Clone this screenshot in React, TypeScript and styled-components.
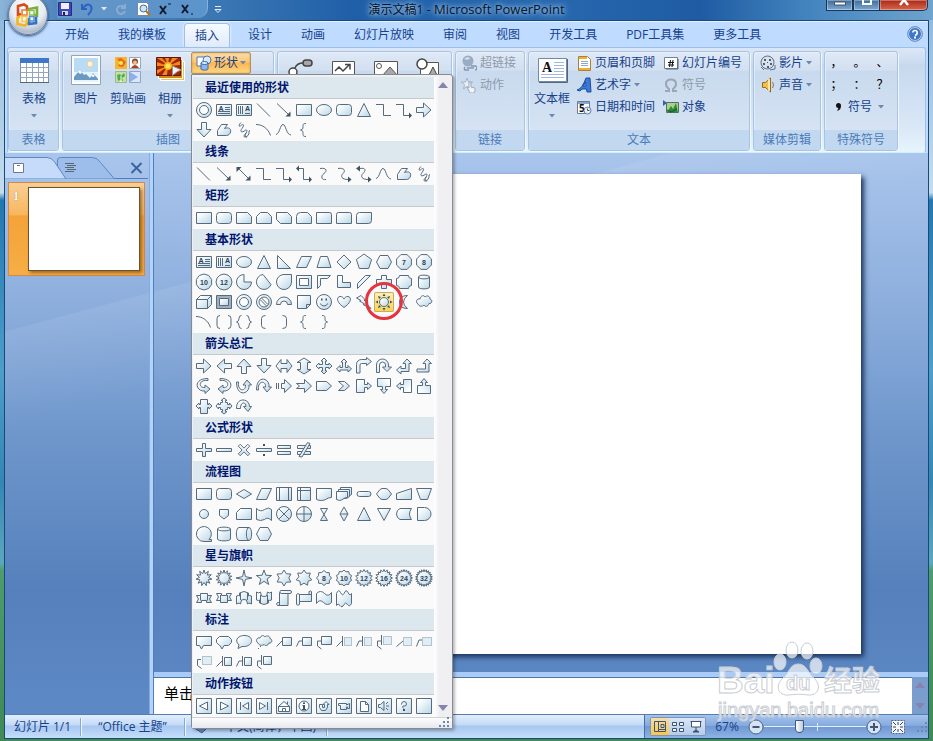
import React from "react";
import styled, { createGlobalStyle, css } from "styled-components";

const Global = createGlobalStyle`
  * { box-sizing: border-box; }
  body {
    margin: 0;
    font-family: "Open Sans", "Noto Sans CJK SC", sans-serif;
    font-size: 12px;
    line-height: 18px;
    color: #15428b;
  }
  button, textarea, input { font: inherit; color: inherit; margin: 0; }
  button { padding: 0; border: 0; background: none; cursor: pointer; white-space: nowrap; }
  svg { display: block; flex: none; }
`;

/* ---------- shape gallery data ---------- */

// Each drawing lives in a 20x20 cell. Prefixes: f filled outline, l line,
// s solid, w pale fill, k dark fill, d dotted outline, t caption, r transform.
const poly = (n: number, r: number, turn = 0, cx = 10, cy = 10) =>
  "M" +
  Array.from({ length: n }, (_, i) => {
    const a = (Math.PI * 2 * i) / n - Math.PI / 2 + turn;
    return `${(cx + r * Math.cos(a)).toFixed(1)} ${(cy + r * Math.sin(a)).toFixed(1)}`;
  }).join("L") +
  "Z";

const star = (n: number, R: number, r: number) =>
  "M" +
  Array.from({ length: n * 2 }, (_, i) => {
    const a = (Math.PI * i) / n - Math.PI / 2;
    const q = i % 2 ? r : R;
    return `${(10 + q * Math.cos(a)).toFixed(1)} ${(10 + q * Math.sin(a)).toFixed(1)}`;
  }).join("L") +
  "Z";

const circle = (r: number, cx = 10, cy = 10) =>
  `M${cx - r} ${cy}a${r} ${r} 0 1 0 ${2 * r} 0a${r} ${r} 0 1 0 ${-2 * r} 0z`;

const rightArrow = "f:M2.5 7.5h7v-4.5l7.5 7-7.5 7v-4.5h-7z";
const box = "M2.5 2.5h15v15h-15z";
const bent = "f:M2.5 17V8.5a5 5 0 0 1 5-5h5V1.5l5 4-5 4V7.5h-5a1.5 1.5 0 0 0-1.5 1.5v8z";
const calloutArrow = "f:M2.5 3.5h8v5h3v-2l4 3.5-4 3.5v-2h-3v5h-8z";
const uturn = "f:M2.5 16.5V9a6 6 0 0 1 12 0v2h3l-4.5 4.5-4.5-4.5h3V9a3 3 0 0 0-6 0v7.5z";
const curved = "f:M14 2.5C5 2.5 2 7 3.5 11c1 2.5 4 4.5 7.5 4v2.5l5-4.5-5-4v2.5C7 12 5.5 9 6.5 7S10 4 14 4.5z";

const S: Record<string, string[]> = {
  donut: ["f:" + circle(7.5), "w:" + circle(4.5)],
  textbox: ["f:M2.5 4.5h15v11h-15z", "l:M11 7.5h5M11 9.5h5M4 11.5h12M4 13.5h12", "t:7,10.5:A"],
  vtextbox: ["f:M2.5 4.5h15v11h-15z", "l:M4.5 6v8M6.5 6v8M8.5 6v8M11 13.5h5", "t:13.5,11:A"],
  line: ["l:M3 3.5L16 16.5"],
  arrowLine: ["l:M3 3.5L14 14", "s:M16.5 16.5v-5l-5 5z"],
  dblArrow: ["l:M4 4L15 15", "s:M16.5 16.5v-5l-5 5z", "s:M2.5 3v5l5-5z"],
  rect: ["f:M2.5 4.5h15v11h-15z"],
  ellipse: ["f:M2.5 10a7.5 5.5 0 1 0 15 0a7.5 5.5 0 1 0-15 0z"],
  roundRect: ["f:M5.5 4.5h9a3 3 0 0 1 3 3v5a3 3 0 0 1-3 3h-9a3 3 0 0 1-3-3v-5a3 3 0 0 1 3-3z"],
  triangle: ["f:M10 3.5L16.5 16.5h-13z"],
  elbow: ["l:M2 4.5h7.5v11h7.5"],
  elbowArrow: ["l:M2 4.5h7.5v11h5.5", "s:M15 12.5v6l3-3z"],
  elbowDbl: ["l:M5 4.5h4.5v11h5.5", "s:M15 12.5v6l3-3z", "s:M5 1.5v6l-3-3z"],
  right: [rightArrow],
  left: [rightArrow, "r:rotate(180 10 10)"],
  up: [rightArrow, "r:rotate(-90 10 10)"],
  down: [rightArrow, "r:rotate(90 10 10)"],
  freeform: ["f:M3.5 15.5v-5l4-6h6l-3 4c4-1.5 7 0 6 3.5-.5 2-2 3.5-4 3.5z"],
  scribble: ["l:M7 2.5c-3 3-2 5 0 3s4-1 1 3 1 4 3 2 3 1 0 4 1 3 3 1 0-5 2-5M12 13c-2 3 0 5 1 4"],
  arc: ["l:M2 4.5c6 0 12 3.5 14.5 11"],
  curve: ["l:M2 14.5c4-1 4-10 7-10s3 10 8 10.5"],
  lbrace: ["l:M12 3.5c-3 0-3 1-3 3s0 3-2.5 3.5c2.5.5 2.5 1.5 2.5 3.5s0 3 3 3"],
  rbrace: ["l:M8 3.5c3 0 3 1 3 3s0 3 2.5 3.5c-2.5.5-2.5 1.5-2.5 3.5s0 3-3 3"],
  sCurve: ["l:M6 4.5c6-1 8 2 4 5s-2 7 2 6"],
  sCurveArrow: ["l:M4 4.5c6-1 8 2 5 5s-1 6 5 6", "s:M14 12.5v6l3.5-3z"],
  sCurveDbl: ["l:M6 4.5c6-1 6 2 3 5s-1 6 5 6", "s:M14 12.5v6l3.5-3z", "s:M6 1.5v6l-4-3z"],
  snip1: ["f:M2.5 4.5h11l4 4v7h-15z"],
  snip2: ["f:M2.5 8.5l4-4h7l4 4v7h-15z"],
  snipDiag: ["f:M2.5 4.5h11l4 4v7h-11l-4-4z"],
  snipRound: ["f:M2.5 8.5a4 4 0 0 1 4-4h7l4 4v7h-15z"],
  round1: ["f:M2.5 4.5h13a2 2 0 0 1 2 2v9h-15z"],
  round2: ["f:M4.5 4.5h11a2 2 0 0 1 2 2v9h-15v-9a2 2 0 0 1 2-2z"],
  roundDiag: ["f:M5.5 4.5h12v8a3 3 0 0 1-3 3h-12v-8a3 3 0 0 1 3-3z"],
  rtTriangle: ["f:M3.5 3.5L16.5 16.5h-13z"],
  parallelogram: ["f:M7.5 4.5h10l-5 11h-10z"],
  trapezoid: ["f:M6.5 4.5h7l3.5 11h-14z"],
  diamond: ["f:M10 3L17 10l-7 7-7-7z"],
  pentagon: ["f:" + poly(5, 8)],
  hexagon: ["f:M6 3.5h8l3.5 6.5-3.5 6.5H6L2.5 10z"],
  hept: ["f:" + poly(8, 8, 0.39), "t:10,12.5:7"],
  oct: ["f:" + poly(8, 8, 0.39), "t:10,12.5:8"],
  dec: ["f:" + poly(10, 8), "t:10,12.5:10"],
  dodec: ["f:" + poly(12, 8), "t:10,12.5:12"],
  pie: ["f:M10 2.5a7.5 7.5 0 1 0 7.5 7.5H10z"],
  chord: ["f:M9 2.5a7.5 7.5 0 1 0 8 10z"],
  tear: ["f:M10 2.5h7.5V10A7.5 7.5 0 1 1 10 2.5z"],
  frame: ["f:M2.5 3.5h15v13h-15z", "w:M5.5 6.5h9v7h-9z"],
  halfFrame: ["f:M3.5 3.5h13l-3 3h-7v7l-3 3z"],
  lShape: ["f:M3.5 3.5h5v7h8v5h-13z"],
  stripe: ["f:M3.5 16.5v-5l8-8h5z"],
  cross: ["f:M7.5 3.5h5v4h5v5h-5v4h-5v-4h-5v-5h5z"],
  plaque: ["f:M5.5 3.5h9q0 3 3 3v7q-3 0-3 3h-9q0-3-3-3v-7q3 0 3-3z"],
  can: ["f:M4.5 5v10c0 2.5 11 2.5 11 0V5c0-2.5-11-2.5-11 0z", "l:M4.5 5c0 2.5 11 2.5 11 0"],
  cube: ["f:M2.5 7.5l4-4h11v9l-4 4h-11z", "l:M2.5 7.5h11v9M13.5 7.5l4-4"],
  bevel: ["k:M2.5 3.5h15v13h-15z", "f:M5.5 6.5h9v7h-9z"],
  noSym: ["f:" + circle(7.5), "w:" + circle(5), "l:M6 7.5l6.5 6.5M7.5 6l6.5 6.5"],
  blockArc: ["f:M2.5 12.5a7.5 7.5 0 0 1 15 0h-4a3.5 3.5 0 0 0-7 0z"],
  fold: ["f:M3.5 3.5h13v9l-4 4h-9z", "l:M12.5 16.5v-4h4"],
  smiley: ["f:" + circle(7.5), "l:M6 11.5q4 5 8 0", "s:M7 6.500h1.5v2H7zM11.5 6.5H13v2h-1.5z"],
  heart: ["f:M10 15.5C2 10 2.5 5 6 4.5c2 0 3.5 1 4 2.5.5-1.5 2-2.5 4-2.5 3.5.5 4 5.5-4 11z"],
  bolt: ["f:M2.5 6l4.5-2.5 4 4-1 .5 4 4-1 .5 4 4-8-4 1.5-.5-5-3 1.5-.5z"],
  sun: ["f:" + circle(4.5), "s:M10 1.5l1.500 2.5h-3zM10 18.5l1.5-2.5h-3zM1.5 10L4 8.5v3zM18.5 10L16 8.5v3zM4 4l3 1-2 2zM16 4l-3 1 2 2zM4 16l3-1-2-2zM16 16l-3-1 2-2z"],
  moon: ["f:M13.5 3.5q-8 6.5 0 13-8 0-8-6.5t8-6.5z"],
  cloud: ["f:M4 12c-3-2-1-6 2-5 1-4 4-4 5-2 2-2 5-1 5 2 3 1 2 5-1 4.500-1 3.5-4 3.5-5 1.5-2 2-5 1.5-6-1z"],
  brackets: ["l:M6 3.5q-3 0-3 3v7q0 3 3 3M14 3.5q3 0 3 3v7q0 3-3 3"],
  braces: ["l:M7.5 3.5q-2.5 0-2.5 3t-2.5 3.5q2.5.5 2.5 3.5t2.5 3M12.5 3.5q2.5 0 2.5 3t2.5 3.5q-2.5.5-2.5 3.5t-2.5 3"],
  lbracket: ["l:M11.5 3.5q-4 0-4 3v7q0 3 4 3"],
  rbracket: ["l:M8.5 3.5q4 0 4 3v7q0 3-4 3"],
  leftRight: ["f:M2 10l5-6.5v4h6v-4l5 6.5-5 6.5v-4H7v4z"],
  upDown: ["f:M10 2l7 4.5h-3.5v7H17L10 18l-7-4.5h3.5v-7H3z"],
  quad: ["f:M10 2l3 3h-1.5v3.5H15V7l3 3-3 3v-1.5h-3.5V15H13l-3 3-3-3h1.5v-3.5H5V13l-3-3 3-3v1.5h3.5V5H7z"],
  triArrow: ["f:M10 3l3 3h-1.5v5.5H14v-2l3.5 3.5-3.5 3v-2H6v2L2.5 13 6 9.5v2h2.5V6H7z"],
  bentArrow: [bent],
  uturn: [uturn],
  leftUp: ["f:M13 3l4.5 4.5h-2.5v8H7V18l-4.5-4L7 10v2.5h4.5v-5H9z"],
  bentUp: ["f:M13 3l4.5 4.5h-2.5v8.5H3v-3h8.5v-5.5H9z"],
  curvedRight: [curved],
  curvedLeft: [curved, "r:translate(20 0) scale(-1 1)"],
  curvedUp: [curved, "r:rotate(-90 10 10)"],
  curvedDown: [curved, "r:translate(20 0) scale(-1 1) rotate(90 10 10)"],
  striped: ["f:M7.5 7.5h3v-4l7 6.5-7 6.5v-4h-3z", "l:M2.5 7v6M4.5 7v6"],
  notched: ["f:M2.5 7.5h8v-4l7 6.5-7 6.5v-4h-8l3-2.5z"],
  homePlate: ["f:M2.5 5.5h10l5 4.5-5 4.5h-10z"],
  chevron: ["f:M4.5 5.5h6l5 4.5-5 4.5h-6l5-4.5z"],
  rightCall: [calloutArrow],
  downCall: [calloutArrow, "r:rotate(90 10 10)"],
  leftCall: [calloutArrow, "r:rotate(180 10 10)"],
  upCall: [calloutArrow, "r:rotate(-90 10 10)"],
  lrCall: ["f:M6.5 3.5h7v5h1.5V7l3 3-3 3v-1.5h-1.5v6h-7v-6H5V13l-3-3 3-3v1.5h1.5z"],
  quadCall: ["f:M10 2l3 2.5h-1.5v2h2v2h2V7l2.5 3-2.5 3v-1.500h-2v2h-2v2H13L10 18l-3-2.5h1.5v-2h-2v-2h-2V13L2 10l2.5-3v1.5h2v-2h2v-2H7z"],
  circular: ["f:M2.5 12.5C2 1 15.5 2 15.5 10.5h2l-3.5 5-4.5-5h2.5c0-5-5.5-5-5.5 2z"],
  plus: ["f:M8.5 3.5h3v5h6v3h-6v5h-3v-5h-6v-3h6z"],
  minus: ["f:M2.5 8.5h15v3h-15z"],
  times: ["f:M8.5 2.5h3v6h6v3h-6v6h-3v-6h-6v-3h6z", "r:rotate(45 10 10) translate(1 1) scale(.9)"],
  divide: ["f:M2.5 8.5h15v3h-15z", "s:M9 4h2v2H9zM9 14h2v2H9z"],
  equal: ["f:M3.5 5.5h13v3h-13z", "f:M3.5 11.5h13v3h-13z"],
  notEqual: ["f:M3.5 5.5h13v3h-13z", "f:M3.5 11.5h13v3h-13z", "f:M5 16.5L13.5 2.5l2.5 1L8 17z"],
  flatDiamond: ["f:M10 5.5l7.5 4.5-7.5 4.5L2.5 10z"],
  predefined: ["f:M2.5 3.5h15v13h-15z", "l:M5.5 3.5v13M14.5 3.5v13"],
  internal: ["f:M3.5 3.5h13v13h-13z", "l:M6.5 3.5v13M3.5 6.5h13"],
  document: ["f:M2.5 4.5h15v9c-5 0-5 3-10 3q-3 0-5-1z"],
  multidoc: ["f:M6.5 3.5h11v7l-3 2h-8z", "f:M4.5 5.5h11v7l-3 2h-8z", "f:M2.5 7.5h11v6c-4 0-5 3-8 3l-3-1z"],
  terminator: ["f:M5.5 7.5h9a2.5 2.5 0 0 1 0 5h-9a2.5 2.5 0 0 1 0-5z"],
  prep: ["f:M6 5.5l2-1h4l2 1 3.5 4.5-3.5 4.5-2 1H8l-2-1L2.5 10z"],
  manualIn: ["f:M2.5 9.5l15-5v11h-15z"],
  manualOp: ["f:M2.5 4.5h15l-4 11h-7z"],
  circleSm: ["f:" + circle(4.5)],
  offpage: ["f:M5.5 5.5h9v6L10 15l-4.5-3.5z"],
  card: ["f:M6.5 4.5h11v11h-15v-7z"],
  tape: ["f:M2.5 4.5q4 4 8 1 4-3 7 0v11q-4-4-7-1-4 2-8 0z"],
  sumJ: ["f:" + circle(7.5), "l:M5 5l10 10M15 5L5 15"],
  orJ: ["f:" + circle(7.5), "l:M10 2.5v15M2.5 10h15"],
  collate: ["f:M6.5 4.5h7L6.5 16.5h7z"],
  sort: ["f:M10 3l4 7-4 7-4-7z", "l:M6 10h8"],
  merge: ["f:M3.5 4.5h13L10 16.5z"],
  stored: ["f:M6 4.5h11.5q-4 5.5 0 11H6q-3.5-1.5-3.5-5.5T6 4.5z"],
  delay: ["f:M3.5 3.5h7a6.5 6.5 0 0 1 0 13h-7z"],
  seq: ["f:M10 17.5a7.5 7.5 0 1 1 5-2h2.5v2z"],
  disk: ["f:M3.5 5v10c0 2.5 13 2.5 13 0V5c0-2.5-13-2.5-13 0z", "l:M3.5 5c0 2.5 13 2.5 13 0"],
  direct: ["f:M5 3.5h10c3.5 0 3.5 13 0 13H5c-3.5 0-3.5-13 0-13z", "l:M15 3.5c-3.5 0-3.5 13 0 13"],
  display: ["f:M6 3.5h8l3.5 6.5-3.5 6.5H6L2.5 10z"],
  boom1: ["f:" + star(11, 8, 4.5)],
  boom2: ["f:" + star(14, 8, 4.8)],
  star4: ["f:" + star(4, 8, 2)],
  star5: ["f:" + star(5, 8, 3.3)],
  star6: ["f:" + star(6, 8, 4.8)],
  star7: ["f:" + star(7, 8, 5.2)],
  star8: ["f:" + star(8, 7.5, 6), "t:10,12.5:8"],
  star10: ["f:" + star(10, 8, 6.5), "t:10,12.5:10"],
  star12: ["f:" + star(14, 8.5, 6.3), "t:10,12.5:12"],
  star16: ["f:" + star(16, 8.5, 6.3), "t:10,12.5:16"],
  star24: ["f:" + star(20, 8.5, 6.3), "t:10,12.5:24"],
  star32: ["f:" + star(22, 8.5, 6.3), "t:10,12.5:32"],
  ribbonUp: ["f:M2.5 7.5h4v-2h7v2h4l-2 3.5 2 3.5h-5v-2h-5v2h-5l2-3.5z", "l:M6.5 7.5v5M13.5 7.5v5"],
  ribbonDown: ["f:M2.5 5.5h5v2h5v-2h5l-2 3.5 2 3.5h-4v2h-7v-2h-4l2-3.5z", "l:M6.5 7v6M13.5 7v6"],
  ribbonCurveUp: ["f:M2.5 8q2-1 3 0V5q4.5-3 9 0v3q1-1 3 0v8q-3-2-4 0l-1-4q-2.5-1-5 0l-1 4q-1-2-4 0z", "l:M6.5 5v7M13.5 5v7"],
  ribbonCurveDown: ["f:M2.5 4q2 2 4 0l1 4q2.5 1 5 0l1-4q2 2 4 0v8q-2 1-3 0v3q-4.5 3-9 0v-3q-1 1-3 0z", "l:M6.5 7v8M13.5 7v8"],
  vScroll: ["f:M6.5 4.5a1.5 1.5 0 0 1 0-2h9.5a1.5 1.5 0 0 1 0 3h-2v12H3.5q-2-1.5 0-3h2v-10z", "l:M6.5 5.5h8M5.5 14.5v3"],
  hScroll: ["f:M2.5 6.5q1.5-2 3 0h9.5V3.5q2-1 2.5 0v10h-12v3q-2 1.5-3 0z", "l:M5.5 6v7.5M15 6.5h2"],
  wave: ["f:M2.5 5.5q4-4 8 0t7-1v10q-4 4-8 0t-7 1z"],
  doubleWave: ["f:M2.5 5.5q2-5 4-1t3.5 1q2-5 4-1t3.5 1v10q-2 4-4 1t-3.5 0q-2 4-4 1t-3.5 0z"],
  callRect: ["f:M2.5 4.5h15v9H9.5l-2 3.5-2-3.5h-3z"],
  callRound: ["f:M5.5 4.5h9l3 3v3l-3 3H10l-2 3.5-2-3.5h-.5l-3-3v-3z"],
  callOval: ["f:M8 14.5l-4 2 1-3.5C-1 7 6 3.5 10 3.5c6 0 8 3 7.500 6s-4 5.5-9.500 5z"],
  callCloud: ["f:M4 11c-3-2-1-6 2-5 1-3 4-3 5-1 2-2 5-1 5 1.5 3 1 2 5-1 4.5-1 3-4 3-5 1.5-2 1.5-5 1-6-1.5z", "l:M6 14.5h1M4 16.5h1"],
  lineCall1: ["f:M8.5 5.5h9v8h-9z", "l:M8 9L2.5 14.5"],
  lineCall2: ["f:M8.5 5.5h9v8h-9z", "l:M8 9H5L2.5 14.5"],
  lineCall3: ["f:M7.5 4.5h10v8h-10z", "l:M7 9H3.5v5l4 3"],
  accent1: ["d:M10.5 5.5h7v8h-7z", "l:M8.5 4v10M8 9l-5.5 5.5"],
  accent2: ["d:M10.5 5.5h7v8h-7z", "l:M8.5 4v10M8 9H5l-2.5 5.5"],
  accent3: ["d:M9.5 4.5h8v8h-8z", "l:M7.5 3v10M7 9H3.5v5l4 3"],
  noBorder1: ["d:M9.5 5.5h8v8h-8z", "l:M9 9l-6.5 5.5"],
  noBorder2: ["d:M8.5 5.5h9v8h-9z", "l:M8 8H5l-2.5 6.5"],
  noBorder3: ["d:M8.5 4.5h9v8h-9z", "l:M7 7.5H3.5v6l4 3"],
  both1: ["f:M10.5 5.5h7v8h-7z", "l:M8.5 4v10M8 9l-5.5 5.5"],
  both2: ["f:M10.5 5.5h7v8h-7z", "l:M8.5 4v10M8 9H5l-2.5 5.5"],
  both3: ["f:M9.5 4.5h8v8h-8z", "l:M7.5 3v10M7 9H3.5v5l4 3"],
  actBack: ["f:" + box, "w:M13.5 6v8l-8-4z"],
  actNext: ["f:" + box, "w:M6.5 6v8l8-4z"],
  actBegin: ["f:" + box, "w:M14.5 6.5v7L8.5 10z", "l:M6.5 6v8"],
  actEnd: ["f:" + box, "w:M5.5 6.5v7l6-3.5z", "l:M13.5 6v8"],
  actHome: ["f:" + box, "w:M4.5 10.5L10 5.5l5.5 5v5h-11z", "l:M4 10.5h12M8.5 15.5v-3h3v3M13.5 8V5.5"],
  actInfo: ["f:" + box, "w:" + circle(5), "s:M9 6.5h2v1.5H9zM8.5 9H11v4h1v1H8v-1h1v-3h-.5z"],
  actReturn: ["f:" + box, "f:M5.5 8.5h3v3h2v-3H9l3-3 3 3h-1.5v3l-2 3h-4l-2-3z"],
  actMovie: ["f:" + box, "f:M4.5 7.5h8v1.5l3-1.5v5h-2v-1.5h-1v2.5h-6v-4h-2z"],
  actDoc: ["f:" + box, "w:M6.5 5.5h5l3 3v7h-8z", "l:M11.5 5.5v3h3"],
  actSound: ["f:" + box, "f:M4.5 8.5h2l3.5-3v9l-3.5-3h-2z", "l:M12 8l2-2M12 10h3M12 12l2 2"],
  actHelp: ["f:" + box, "l:M7.5 8.5q0-3 2.5-3t2.5 2.5-2.5 2-.5 2.500", "s:M9 13h2v2H9z"],
  actBlank: ["f:" + box],
};

const sections: { title: string; items: string }[] = [
  { title: "最近使用的形状", items: "donut textbox vtextbox line arrowLine rect ellipse roundRect triangle elbow elbowArrow right down freeform scribble arc curve lbrace" },
  { title: "线条", items: "line arrowLine dblArrow elbow elbowArrow elbowDbl sCurve sCurveArrow sCurveDbl curve freeform scribble" },
  { title: "矩形", items: "rect roundRect snip1 snip2 snipDiag snipRound round1 round2 roundDiag" },
  { title: "基本形状", items: "textbox vtextbox ellipse triangle rtTriangle parallelogram trapezoid diamond pentagon hexagon hept oct dec dodec pie chord tear frame halfFrame lShape stripe cross plaque can cube bevel donut noSym blockArc fold smiley heart bolt sun moon cloud arc brackets braces lbracket rbracket lbrace rbrace" },
  { title: "箭头总汇", items: "right left up down leftRight upDown quad triArrow bentArrow uturn leftUp bentUp curvedRight curvedLeft curvedUp curvedDown striped notched homePlate chevron rightCall downCall leftCall upCall lrCall quadCall circular" },
  { title: "公式形状", items: "plus minus times divide equal notEqual" },
  { title: "流程图", items: "rect roundRect flatDiamond parallelogram predefined internal document multidoc terminator prep manualIn manualOp circleSm offpage card tape sumJ orJ collate sort triangle merge stored delay seq disk direct display" },
  { title: "星与旗帜", items: "boom1 boom2 star4 star5 star6 star7 star8 star10 star12 star16 star24 star32 ribbonUp ribbonDown ribbonCurveUp ribbonCurveDown vScroll hScroll wave doubleWave" },
  { title: "标注", items: "callRect callRound callOval callCloud lineCall1 lineCall2 lineCall3 accent1 accent2 accent3 noBorder1 noBorder2 noBorder3 both1 both2 both3" },
  { title: "动作按钮", items: "actBack actNext actBegin actEnd actHome actInfo actReturn actMovie actDoc actSound actHelp actBlank" },
];

const ink = "#566b7e";
const fills: Record<string, string> = { f: "url(#pale)", w: "#fafcfd", k: "#9eb0be", l: "none", d: "#e0edf4" };

const ShapeGlyph = ({ name }: { name: string }) => {
  const parts = S[name];
  const turn = parts.find((p) => p.startsWith("r:"));
  return (
    <svg width="20" height="20" viewBox="0 0 20 20" aria-hidden="true">
      <g transform={turn ? turn.slice(2) : undefined}>
        {parts.map((p, i) => {
          const kind = p[0];
          const body = p.slice(2);
          if (kind === "r") return null;
          if (kind === "t") {
            const [pos, text] = body.split(":");
            const [x, y] = pos.split(",");
            return (
              <text key={i} x={x} y={y} fontSize="7" fontWeight="700" fontFamily="Liberation Sans, sans-serif" textAnchor="middle" fill="#2c4156">
                {text}
              </text>
            );
          }
          if (kind === "s") return <path key={i} d={body} fill="#40525f" />;
          return (
            <path key={i} d={body} fill={fills[kind]} stroke={kind === "d" ? "#7890a2" : ink} strokeDasharray={kind === "d" ? "1 1" : undefined} />
          );
        })}
      </g>
    </svg>
  );
};

/* ---------- frame ---------- */

const Desktop = styled.div`
  height: 100vh;
  min-height: 480px;
  display: flex;
  flex-direction: column;
  padding: 0 4px 2px;
  overflow: hidden;
  position: relative;
  background: linear-gradient(#8cb6dc 0, #c5dced 26%, #2277b0 27%, #4d9fc9 50%, #3486b4 65%, #5ca8bc 76%, #4d9c6b 77%, #3f8a55 100%);
`;

const TitleBar = styled.header`
  height: 20px;
  margin: 0 -4px;
  flex: none;
  display: grid;
  grid-template-columns: minmax(0, 1fr) auto minmax(0, 1fr);
  align-items: start;
  background: linear-gradient(90deg, #8db4d8 0, #4f86bd 6%, #3a76b3 24%, #1f5fa8 38%, #2767ae 60%, #1e5ba3 75%, #4585bf 87%, #6ea4cd 100%);
`;

const QuickBar = styled.div`
  display: flex;
  align-items: center;
  height: 17px;
  padding-left: 57px;
  gap: 6px;
`;

const QuickPill = styled.div`
  display: flex;
  align-items: center;
  gap: 6px;
  height: 18px;
  padding: 0 12px 0 0;
  border-radius: 0 0 10px 0;
  background: linear-gradient(90deg, #8db4d866, #5c94cc);
  border-right: 1px solid #88b2dc;
`;

const QuickButton = styled.button`
  height: 16px;
`;

const WindowTitle = styled.h1`
  margin: 0;
  font-size: 12px;
  font-weight: 400;
  line-height: 18px;
  height: 18px;
  color: #06142b;
  text-shadow: 0 0 4px #b9d6f3, 0 0 8px #a5c8ec;
`;

const TitleApp = styled.span`
  font-size: 13px;
`;

const Caption = styled.div`
  display: flex;
  justify-content: flex-end;
  padding-right: 5px;
`;

const CaptionButton = styled.button<{ $close?: boolean }>`
  width: ${(p) => (p.$close ? 48 : 27)}px;
  height: 11px;
  overflow: hidden;
  display: flex;
  justify-content: center;
  border: 1px solid #17385e;
  border-top: 0;
  border-left-width: ${(p) => (p.$close ? 0 : 1)}px;
  border-radius: ${(p) => (p.$close ? "0 0 5px 0" : "0")};
  box-shadow: inset 0 0 0 1px #ffffff55;
  background: ${(p) => (p.$close ? "linear-gradient(#a82718, #d8664a)" : "linear-gradient(#3b6a9b, #7fa9cf)")};
`;

const OfficeButton = styled.button`
  position: absolute;
  left: 8px;
  top: -5px;
  z-index: 5;
  width: 40px;
  height: 40px;
  border-radius: 50%;
  display: grid;
  place-items: center;
  border: 1px solid #6c7f99;
  background: radial-gradient(circle at 50% 30%, #fff 0, #e8edf3 50%, #aebccd 75%, #f4f8fc 100%);
  box-shadow: 0 1px 3px #1b3d6a;
`;

const Window = styled.div`
  flex: 1;
  min-height: 0;
  display: flex;
  flex-direction: column;
  border: 1px solid #174a78;
  background: #bfdbff;
`;

const TabRow = styled.nav`
  flex: none;
  height: 26px;
  display: flex;
  align-items: flex-end;
  gap: 1px;
  padding: 0 5px 0 46px;
  border-top: 1px solid #e3f0ff;
`;

const Tab = styled.button<{ $active?: boolean }>`
  height: 24px;
  padding: 0 ${(p) => (p.$active ? 10 : 14)}px;
  margin: 0 ${(p) => (p.$active ? 3 : 0)}px;
  border: 1px solid transparent;
  border-width: ${(p) => (p.$active ? "1px 1px 0" : "0")};
  border-radius: 4px 4px 0 0;
  ${(p) =>
    p.$active &&
    css`
      border-color: #a0bfe5;
      background: linear-gradient(#f7fbff, #dfeafa);
      box-shadow: 0 0 3px #fff;
    `}
`;

const Help = styled.button`
  margin: 0 0 5px auto;
`;

const Ribbon = styled.div`
  flex: none;
  height: 106px;
  margin: 0 2px;
  padding: 3px 0 1px;
  display: flex;
  gap: 3px;
  border: 1px solid #9dc0ea;
  border-bottom-color: #d0f0fb;
  border-radius: 3px;
  background: linear-gradient(#dbe7f7 0, #ccdcf0 14%, #c7d8ee 16%, #d9e7f6 75%, #e6f4fd 100%);
`;

const Group = styled.section<{ $w: number }>`
  flex: none;
  width: ${(p) => p.$w}px;
  display: flex;
  flex-direction: column;
  border: 1px solid #a9c3e2;
  border-radius: 3px;
  box-shadow: inset 1px 1px 0 #eef5fd88, 1px 1px 0 #f0f7ff;
  background: linear-gradient(#dfe9f6 0, #d3e0f1 18%, #c9daee 20%, #d9e6f5 100%);
`;

const GroupBody = styled.div<{ $pad?: number }>`
  flex: 1;
  min-height: 0;
  display: flex;
  align-items: flex-start;
  padding-left: ${(p) => p.$pad ?? 2}px;
`;

const GroupLabel = styled.h2`
  margin: 0;
  height: 20px;
  line-height: 20px;
  font-size: 12px;
  font-weight: 400;
  text-align: center;
  color: #4d7ab8;
  background: #c1d8f0;
  border-radius: 0 0 3px 3px;
`;

const BigButton = styled.button`
  width: 42px;
  display: flex;
  flex-direction: column;
  align-items: center;
  padding-top: 2px;
  gap: 4px;
`;

const BigLabel = styled.span`
  height: 20px;
`;

const Column = styled.div<{ $w: number; $inset?: boolean }>`
  width: ${(p) => p.$w}px;
  padding-left: ${(p) => (p.$inset ? 3 : 0)}px;
  display: flex;
  flex-direction: column;
  align-items: flex-start;
`;

const SmallButton = styled.button<{ $off?: boolean }>`
  height: 22px;
  display: flex;
  align-items: center;
  gap: 3px;
  color: ${(p) => (p.$off ? "#8d9aab" : "#15428b")};
`;

const ShapesAnchor = styled.div`
  position: relative;
`;

const ShapesButton = styled.button`
  height: 22px;
  width: 60px;
  display: flex;
  align-items: center;
  justify-content: center;
  gap: 2px;
  border: 1px solid #b3935a;
  border-radius: 2px;
  background: linear-gradient(#fbdcae 0, #fcc873 45%, #fdb64c 50%, #fdd886 100%);
  box-shadow: inset 0 0 2px #9d6c1e88;
`;

const SymbolGrid = styled.div`
  width: 72px;
  display: grid;
  grid-template-columns: repeat(3, 23px);
  grid-auto-rows: 22px;
  justify-items: center;
`;

const SymbolButton = styled.button`
  color: #000;
  width: 20px;
`;

const SymbolMenu = styled(SmallButton)`
  grid-column: 1 / -1;
  justify-self: start;
  padding-left: 10px;
  gap: 6px;
`;

/* ---------- gallery popup ---------- */

const Popup = styled.div`
  position: absolute;
  z-index: 20;
  left: 0;
  top: 22px;
  width: 262px;
  border: 1px solid #868b93;
  border-radius: 0 3px 3px 3px;
  background: #f0f0f2;
  box-shadow: 2px 2px 3px #0004;
`;

const PopupMain = styled.div`
  display: flex;
  padding: 2px 0 0 1px;
`;

const Gallery = styled.div`
  width: 241px;
  background: #fafafa;
`;

const SectionTitle = styled.h3`
  margin: 0;
  height: 22px;
  padding-left: 12px;
  font-size: 12px;
  line-height: 21px;
  color: #00156e;
  background: #dde7ee;
  border-bottom: 1px solid #c5c9cd;
`;

const Cells = styled.div`
  display: grid;
  grid-template-columns: repeat(12, 20px);
  grid-auto-rows: 20px;
  padding: 1px 0 1px 1px;
`;

const Cell = styled.button<{ $on?: boolean }>`
  position: relative;
  ${(p) =>
    p.$on &&
    css`
      border-radius: 2px;
      background: linear-gradient(#fdf0bd, #fbd24f);
      box-shadow: inset 0 0 0 1px #c8ac62;
    `}
`;

const Marker = styled.span`
  position: absolute;
  left: -9px;
  top: -10px;
  width: 38px;
  height: 38px;
  border: 3px solid #e5343d;
  border-radius: 50%;
  pointer-events: none;
  z-index: 2;
`;

const Scroll = styled.div`
  flex: 1;
  display: flex;
  flex-direction: column;
  justify-content: space-between;
  align-items: center;
  padding: 5px 0 6px;
  background: linear-gradient(90deg, #fff 0, #efeff2 30%, #f0f0f2);
`;

const PopupFoot = styled.div`
  height: 11px;
  display: flex;
  justify-content: flex-end;
  align-items: flex-end;
  padding: 0 2px 1px 0;
  border-top: 1px solid #cfd2d8;
  background: linear-gradient(#fdfdfe, #e6e8ee);
`;

/* ---------- workspace ---------- */

const Work = styled.main`
  flex: 1;
  min-height: 0;
  display: flex;
  background: linear-gradient(165deg, transparent 22%, #ffffff14 22.2%, transparent 34%), linear-gradient(#a9c5ec 0, #8fb0de 25%, #6f97cc 50%, #5580bb 78%, #5d89c6 100%);
`;

const SidePane = styled.aside`
  width: 144px;
  padding: 4px 1px 0 0;
`;

const PaneTabs = styled.div`
  height: 22px;
  display: flex;
  justify-content: space-between;
  align-items: center;
  border-bottom: 1px solid #4f7fc0;
`;

const PaneClose = styled.button`
  margin-right: 5px;
`;

const ThumbItem = styled.button`
  margin: 3px 0 0 3px;
  width: 137px;
  height: 94px;
  display: flex;
  align-items: flex-start;
  gap: 9px;
  padding: 4px;
  border: 1px solid #d28a49;
  background: linear-gradient(#f9cf93 0, #f8b760 34%, #f4a33a 36%, #f7ad45 100%);
  color: #fff;
  font-weight: 700;
  font-family: "Liberation Serif", serif;
  font-size: 12px;
  text-shadow: 0 0 1px #855;
`;

const Thumb = styled.span`
  flex: 1;
  align-self: stretch;
  background: #fff;
  border: 1px solid #6b5330;
  box-shadow: 2px 2px 3px #7a4a10aa;
`;

const Divider = styled.div`
  width: 5px;
  background: #b4d3fb;
  border-right: 1px solid #4f7fc0;
  border-left: 1px solid #86abdf;
`;

const Stage = styled.div`
  flex: 1;
  min-width: 0;
  display: flex;
  flex-direction: column;
`;

const SlideArea = styled.div`
  flex: 1;
  min-height: 0;
  padding: 21px 67px 18px 66px;
  display: flex;
`;

const Slide = styled.div`
  flex: 1;
  background: #fff;
  box-shadow: 3px 3px 5px #1c355c;
`;

const Notes = styled.div`
  height: 42px;
  flex: none;
  display: flex;
  border-top: 5px solid #a9cbf8;
`;

const NotesBox = styled.textarea`
  flex: 1;
  min-width: 0;
  resize: none;
  outline: 0;
  overflow: hidden;
  border: 0;
  border-top: 1px solid #54749e;
  padding: 5px 10px;
  font-size: 15px;
  line-height: 20px;
  color: #000;
  background: #fff;
`;

const NotesScroll = styled.div`
  width: 16px;
  display: flex;
  flex-direction: column;
  justify-content: space-between;
  align-items: center;
  padding: 5px 0;
  background: #7b9dcd;
`;

/* ---------- status bar ---------- */

const Status = styled.footer`
  flex: none;
  height: 24px;
  display: flex;
  align-items: center;
  border-top: 1px solid #567db0;
  background: linear-gradient(#e2eefc 0, #c6dcf7 40%, #a9c8f0 50%, #c5ddfa 100%);
`;

const StatusCell = styled.span<{ $w: number }>`
  width: ${(p) => p.$w}px;
  height: 18px;
  display: flex;
  align-items: center;
  justify-content: center;
  gap: 14px;
  white-space: nowrap;
  border-right: 1px solid #86a8d4;
  box-shadow: 1px 0 0 #eff6ff;
`;

const StatusTools = styled.div`
  margin-left: auto;
  height: 100%;
  display: flex;
  align-items: center;
  padding: 0 0 0 5px;
  border-left: 1px solid #486fa5;
  background: linear-gradient(#a5c3ec 0, #86abdf 45%, #7198d1 50%, #8db3e6 100%);
`;

const ViewSwitch = styled.div`
  display: flex;
  border: 1px solid #7b95b9;
  border-radius: 2px;
`;

const ViewButton = styled.button<{ $on?: boolean }>`
  width: 18px;
  height: 17px;
  display: grid;
  place-items: center;
  background: ${(p) => (p.$on ? "linear-gradient(#f5dda8, #f9c64c)" : "linear-gradient(#dbe6f4, #b4cbe9)")};
`;

const Percent = styled.button`
  width: 42px;
`;

const FitButton = styled(QuickButton)`
  margin: 0 11px 0 8px;
`;

const ZoomRange = styled.input`
  appearance: none;
  width: 102px;
  height: 16px;
  background: linear-gradient(#dce9fa, #dce9fa) 53px 50% / 1px 8px no-repeat, linear-gradient(#e6f0fc, #e6f0fc) 0 50% / 100% 1px no-repeat;
  &::-webkit-slider-thumb {
    appearance: none;
    width: 9px;
    height: 13px;
    border: 1px solid #3e5a80;
    border-radius: 1px 1px 5px 5px;
    background: linear-gradient(90deg, #fff, #b9cae0);
  }
`;

const Watermark = styled.div`
  position: absolute;
  right: 46px;
  bottom: 18px;
  z-index: 4;
  pointer-events: none;
`;

/* ---------- small drawings ---------- */

const Chevron = ({ light }: { light?: boolean }) => (
  <svg width="6" height="4" viewBox="0 0 6 4"><path d="M0 0h6L3 3.5z" fill={light ? "#d6e7f8" : "#6d87ad"} /></svg>
);

const Grip = () => (
  <svg width="11" height="10" viewBox="0 0 11 10" fill="#6f88ad">
    <path d="M8 0h2v2H8zM4 4h2v2H4zM8 4h2v2H8zM0 8h2v2H0zM4 8h2v2H4zM8 8h2v2H8z" />
  </svg>
);

const Tri = ({ up }: { up?: boolean }) => (
  <svg width="10" height="6" viewBox="0 0 10 6"><path d={up ? "M5 0l5 6H0z" : "M0 0h10L5 6z"} fill="#8584ad" /></svg>
);

const OfficeLogo = () => (
  <svg width="26" height="26" viewBox="0 0 26 26" fill="none" strokeWidth="2.6">
    <path d="M12 9V4.5L9 2.5 3 4v9l3-1" stroke="#d94a18" />
    <path d="M14 9V7l8-1.5v8l-3-1" stroke="#79b03d" />
    <path d="M5 14l-2.5 2v6L10 23.5l2-2V17" stroke="#f5b51b" />
    <path d="M14 16v6l7-1v-6.5" stroke="#3474c4" />
    <path d="M7 8h5v5H7z" stroke="#ee7e25" strokeWidth="1.5" />
    <path d="M14.5 8.5H19V13h-4.500z" stroke="#94c44e" strokeWidth="1.5" />
    <path d="M7 14.5h5v5H7z" stroke="#f7c840" strokeWidth="1.5" />
    <path d="M14.5 14.5H19V19h-4.5z" stroke="#5592d4" strokeWidth="1.5" />
  </svg>
);

const TableIcon = () => (
  <svg width="32" height="32" viewBox="0 0 32 32">
    <path d="M2.5 4.5h28v24h-28z" fill="#fff" stroke="#7c90aa" />
    <path d="M2 4h29v5H2z" fill="#3e76c9" />
    <path d="M2.5 13.5h28M2.5 18.5h28M2.5 23.5h28M8.5 9v19M14.5 9v19M20.5 9v19M25.5 9v19" stroke="#93a7bd" />
    <path d="M2 28.5h29" stroke="#52677f" />
  </svg>
);

const PictureIcon = () => (
  <svg width="32" height="32" viewBox="0 0 32 32">
    <path d="M1.5 1.5h29v29h-29z" fill="#fdfeff" stroke="#93a4b8" />
    <path d="M4 4h24v24H4z" fill="#b9dcf6" />
    <path d="M4 18h24v10H4z" fill="#e6f4fb" />
    <circle cx="20" cy="10" r="3" fill="#fff6cf" stroke="#f5cf95" />
    <path d="M4 23l6-7 4 5 2-1 4 4 3-5 5 6v1H4z" fill="#6a9ac2" />
    <path d="M8 18l2-2 2 3-2 1zM21 22l2-2 2 2-2 1z" fill="#fff" />
  </svg>
);

const ClipIcon = () => (
  <svg width="32" height="32" viewBox="0 0 32 32">
    <path d="M3 3h12v12H3z" fill="#f7b52b" /><path d="M5 5l3 3-2 4 5 1 3-5-5-4z" fill="#e36a22" /><circle cx="9" cy="9" r="2" fill="#ffec4b" />
    <path d="M17.5 3.5h11v11h-11z" fill="#fff" stroke="#9aa7b7" /><circle cx="23" cy="7.5" r="3" fill="#8a4a32" /><path d="M19 14q4-6 8 0z" fill="#b33c26" /><circle cx="23" cy="8.5" r="2" fill="#efbd8f" />
    <path d="M3.5 17.5h11v11h-11z" fill="#bfe2a3" stroke="#9bb98c" /><path d="M5 21l3-1 1 2 3-3 1 3-3 2 1 3-3-1-2 1z" fill="#54a944" /><path d="M9 22v6" stroke="#fff" />
    <path d="M17.5 17.5h11v11h-11z" fill="#dae7fb" stroke="#91a5cb" /><path d="M18 18l8 5-8 5z" fill="#8faeea" />
  </svg>
);

const AlbumIcon = () => (
  <svg width="32" height="32" viewBox="0 0 32 32">
    <path d="M6.5 7.5h24v19h-24z" fill="#f4c24a" stroke="#fff" /><path d="M4.5 5.5h24v19h-24z" fill="#cf861c" stroke="#fff" />
    <path d="M2.5 3.5h24v18h-24z" fill="#a5240a" stroke="#5a1a0b" />
    <path d="M3 4h5l6 7zM11 4h4l-1 7zM18 4h6l-9 7zM26 7v4l-12 1zM3 8v4l11 0zM3 16v4l11-8zM8 21h5l1-9z" fill="#f08a1c" />
    <circle cx="14" cy="12" r="4" fill="#eeb02b" /><circle cx="14" cy="12" r="2.5" fill="#f6e948" />
    <path d="M18.5 21.5V12l9 4-4 1.5z" fill="#eef1f2" stroke="#998" />
  </svg>
);

const TextboxIcon = () => (
  <svg width="32" height="32" viewBox="0 0 32 32">
    <path d="M2.5 4.5h28v23h-28z" fill="#fff" stroke="#7389a5" /><path d="M3 28.5h28.5V5" fill="none" stroke="#50657e" />
    <text x="6" y="18" fontSize="14" fontWeight="700" fontFamily="Liberation Serif, serif" fill="#111">A</text>
    <path d="M18 8.5h10M18 11.5h10M18 14.5h10M18 17.5h10M5 20.5h23M5 23.5h23" stroke="#9fb9dc" />
  </svg>
);

const art: Record<string, React.ReactNode> = {
  shapes: <><path d="M1 2h9v9H1z" fill="#fff" stroke="#4a78b8" /><circle cx="11" cy="5" r="4" fill="#dcebfb" stroke="#4a78b8" /><path d="M5 8v6c0 1.5 7 1.5 7 0V8" fill="#8db5ea" stroke="#3869b0" /><ellipse cx="8.5" cy="8" rx="3.5" ry="1.5" fill="#e3f0ff" stroke="#3869b0" /></>,
  link: <><circle cx="7" cy="6" r="5.5" fill="#9aabc4" /><path d="M3 4q3-3 6-1-1 3-6 1z" fill="#d9e1ec" /><path d="M4 12a2 2 0 0 0 0 3h4M14 15a2 2 0 0 0 0-4h-4M6 13h7" fill="none" stroke="#8395b3" strokeWidth="1.5" /></>,
  action: <><path d={star(5, 6, 2.5)} transform="translate(-4 -3)" fill="#e8eef6" stroke="#a3b1c5" /><path d="M8 14l-2-4 2 1V5h2v5l4 1v3l-1 2H9z" fill="#f0f4f9" stroke="#9cabc0" /></>,
  header: <><path d="M2.5 1.5h9l3 3v11h-12z" fill="#fff" stroke="#a98335" /><path d="M3 2h8v2H3zM3 13h11v2H3z" fill="#f0ae34" /><path d="M5 6.5h7M5 8.5h7M5 10.5h7" stroke="#8fa6c5" /></>,
  wordart: <path d="M1 13q5-1 9-12h4l1 14h-4l-.5-3H6l-2 2zM7.5 9H10l-.5-4z" fill="#3b78d8" stroke="#1c4e9f" />,
  date: <><path d="M1.5 2.5h12v12h-12z" fill="#fff" stroke="#6c7e96" /><path d="M2 3h11v2H2z" fill="#8ba5cc" /><text x="3" y="13" fontSize="10" fontWeight="700" fill="#111">5</text><circle cx="11.5" cy="11.5" r="3.5" fill="#e9f0f8" stroke="#6181ab" /><path d="M11.5 9.5v2h2" fill="none" stroke="#456" /></>,
  number: <><path d="M1.5 2.5h13v11h-13z" fill="#fff" stroke="#7084a0" /><path d="M15 4v10H3" fill="none" stroke="#4e637f" /><path d="M7.5 5L6.5 12M10 5l-1 7M5 7.5h6M5 10h6" stroke="#111" /></>,
  omega: <path d="M2 14h4v-2Q3 10 3 7q0-4.500 5-4.500T13 7q0 3-3 5v2h4" fill="none" stroke="#9aa6b6" strokeWidth="2" />,
  object: <><path d="M3.5 3.5h12v10h-12z" fill="#a9cf91" stroke="#57705d" /><path d="M4 13l4-6 2 3 3-6 2 10z" fill="#2e8b36" /><path d="M0 1l4 3-4 3z" fill="#3262a5" /><path d="M4 11l4 2 6-3" stroke="#153" fill="none" /></>,
  movie: <><circle cx="7.5" cy="7.5" r="6.5" fill="#d9e1ea" stroke="#5b6f88" /><path d="M4 4h2v2H4zM9 4h2v2H9zM3 8h2v2H3zM10 8h2v2h-2zM7 7h1v1H7zM7 11h2v2H7z" fill="#4c5f77" /><path d="M1 12l3 3M10 15l5-1v-4" fill="none" stroke="#5b6f88" /></>,
  sound: <><path d="M2.5 5.5h3l5-4.5v14l-5-4.5h-3z" fill="#f3bf4c" stroke="#9a6a1f" /><path d="M9 2v12" stroke="#fff2c4" strokeWidth="1.5" /><path d="M12.5 5q2 3 0 6" fill="none" stroke="#927649" /></>,
  save: <><path d="M1.5 1.5h13v13h-13z" fill="#4147b5" stroke="#242a86" /><path d="M4 2h8v6H4z" fill="#eef" /><path d="M5 10h6v4H5z" fill="#ccd5ee" /><path d="M6 11h2v3H6z" fill="#223" /></>,
  undo: <path d="M3 3v5h5M3.5 8Q8 1 12 5q2 4-3 9" fill="none" stroke="#2c63c2" strokeWidth="2" />,
  redo: <path d="M12 3v4H8M12 7Q9 3 5 6q-3 4 2 7 4 0 5-3" fill="none" stroke="#8faad0" strokeWidth="2" />,
  preview: <><path d="M2.5 1.5h9l2 2v11h-11z" fill="#fff" stroke="#768aa5" /><circle cx="8.5" cy="7.5" r="3.5" fill="#cfe6f7" stroke="#456b91" /><path d="M11 10l4 4.5" stroke="#b57820" strokeWidth="2" /></>,
  sup: <><path d="M3 5l6 8M9 5l-6 8" stroke="#101c30" strokeWidth="2" /><path d="M11 3h3" stroke="#101c30" /></>,
  sub: <><path d="M3 4l6 8M9 4l-6 8" stroke="#101c30" strokeWidth="2" /><path d="M12 13h2" stroke="#101c30" /></>,
  help: <><circle cx="8" cy="8" r="6.5" fill="#3e76c8" stroke="#d3e3f7" /><circle cx="8" cy="8" r="7.3" fill="none" stroke="#4468a0" strokeWidth=".8" /><path d="M5.8 6.5Q6 4.5 8 4.5t2.2 2-2.2 3" fill="none" stroke="#fff" strokeWidth="1.6" /><path d="M7 10.5h2v2H7z" fill="#fff" /></>,
  minusC: <><circle cx="8" cy="8" r="7" fill="#d5e3f5" stroke="#4a6588" /><path d="M4.5 8h7" stroke="#3f5676" strokeWidth="2" /></>,
  plusC: <><circle cx="8" cy="8" r="7" fill="#d5e3f5" stroke="#4a6588" /><path d="M4 8h8M8 4v8" stroke="#3f5676" strokeWidth="2" /></>,
  fit: <><path d="M1.5 1.5h13v13h-13z" fill="#f3f6fa" stroke="#4f6483" strokeDasharray="2 1" /><path d="M3 3l3 3M13 3l-3 3M3 13l3-3M13 13l-3-3M8 3v3M8 10v3M3 8h3M10 8h3" stroke="#33475f" /></>,
  normal: <path d="M2.5 2.5h11v10h-11zM6.5 3v9M9 5.5h3v3H9zM7 10.5h6" fill="none" stroke="#3c5377" />,
  sorter: <path d="M2.5 3.5h4v3h-4zM9.5 3.5h4v3h-4zM2.5 9.5h4v3h-4zM9.5 9.5h4v3h-4z" fill="#eef4fb" stroke="#3c5377" />,
  show: <><path d="M2.5 2.5h11M3.5 3v5h9V3" fill="#fff" stroke="#3c5377" /><path d="M8 8v4M5 13l3-2 3 2z" fill="#3c5377" stroke="#3c5377" /></>,
  spell: <path d="M1 6l6 4 7-8v5l-7 7-6-4z" fill="#6b8bc0" stroke="#3d5c94" />,
};

const Icon = ({ name }: { name: string }) => (
  <svg width="16" height="16" viewBox="0 0 16 16" aria-hidden="true">{art[name]}</svg>
);

const flowArt = [
  { name: "连接线", d: <><circle cx="8" cy="18" r="4" fill="#fff" stroke="#444" strokeWidth="1.5" /><path d="M10 14q2-5 8-5" fill="none" stroke="#444" strokeWidth="1.5" /><rect x="18" y="6" width="9" height="6" rx="3" fill="#a8a6a8" stroke="#444" strokeWidth="1.5" /></> },
  { name: "图表", d: <><path d="M5.5 7.5h22v20h-22z" fill="#fff" stroke="#555" /><path d="M8 17l4-4 4 4 6-6M18 10.5h5v5" fill="none" stroke="#444" strokeWidth="1.5" /></> },
  { name: "图像", d: <><path d="M5.5 7.5h23v20h-23z" fill="#fff" stroke="#555" /><circle cx="10" cy="12" r="2.5" fill="none" stroke="#555" /><path d="M13 22l8-9 8 9z" fill="#aaa" stroke="#555" /></> },
  { name: "图形", d: <><path d="M9.5 8.5h18v18h-18z" fill="#fff" stroke="#555" /><circle cx="11" cy="10" r="5" fill="#fff" stroke="#444" strokeWidth="1.5" /><path d="M17 23l5-10 5 10z" fill="#aaa" stroke="#444" /></> },
];

const tabs = ["开始", "我的模板", "插入", "设计", "动画", "幻灯片放映", "审阅", "视图", "开发工具", "PDF工具集", "更多工具"];

const Big = ({ icon, label, drop }: { icon: React.ReactNode; label: string; drop?: boolean }) => (
  <BigButton>
    {icon}
    <BigLabel>{label}</BigLabel>
    {drop && <Chevron />}
  </BigButton>
);

const Small = ({ icon, label, drop, off }: { icon: string; label: string; drop?: boolean; off?: boolean }) => (
  <SmallButton $off={off} disabled={off}>
    <Icon name={icon} />
    {label}
    {drop && <Chevron />}
  </SmallButton>
);

const ShapesPopup = () => (
  <Popup role="menu" aria-label="形状">
    <PopupMain>
      <Gallery>
        {sections.map((s) => (
          <React.Fragment key={s.title}>
            <SectionTitle>{s.title}</SectionTitle>
            <Cells>
              {s.items.split(" ").map((n) => (
                <Cell key={n} aria-label={n} $on={n === "sun"}>
                  <ShapeGlyph name={n} />
                  {n === "sun" && <Marker />}
                </Cell>
              ))}
            </Cells>
          </React.Fragment>
        ))}
      </Gallery>
      <Scroll>
        <Tri up />
        <Tri />
      </Scroll>
    </PopupMain>
    <PopupFoot><Grip /></PopupFoot>
  </Popup>
);

export default function App() {
  return (
    <Desktop>
      <Global />
      <svg width="0" height="0" aria-hidden="true">
        <defs>
          <linearGradient id="pale" x1="0" y1="0" x2="1" y2="1">
            <stop offset="0.2" stopColor="#fbfdfe" />
            <stop offset="1" stopColor="#b9d6e6" />
          </linearGradient>
        </defs>
      </svg>
      <OfficeButton aria-label="Office"><OfficeLogo /></OfficeButton>
      <TitleBar>
        <QuickBar>
          <QuickPill>
            <QuickButton aria-label="保存"><Icon name="save" /></QuickButton>
            <QuickButton aria-label="撤消"><Icon name="undo" /></QuickButton>
            <Chevron light />
            <QuickButton aria-label="恢复"><Icon name="redo" /></QuickButton>
            <QuickButton aria-label="打印预览"><Icon name="preview" /></QuickButton>
            <QuickButton aria-label="上标"><Icon name="sup" /></QuickButton>
            <QuickButton aria-label="下标"><Icon name="sub" /></QuickButton>
          </QuickPill>
          <QuickButton aria-label="自定义">
            <svg width="8" height="16" viewBox="0 0 8 16"><path d="M1 5.5h6M1 8.5h6L4 11.5z" fill="none" stroke="#e2eefa" /></svg>
          </QuickButton>
        </QuickBar>
        <WindowTitle>演示文稿1 <TitleApp>- Microsoft PowerPoint</TitleApp></WindowTitle>
        <Caption>
          <CaptionButton aria-label="最小化"><svg width="12" height="6" viewBox="0 0 12 6"><path d="M.5 2h11v3H.5z" fill="#fff" stroke="#456" /></svg></CaptionButton>
          <CaptionButton aria-label="最大化"><svg width="12" height="6" viewBox="0 0 12 6"><path d="M2 0v4h8V0" fill="none" stroke="#fff" strokeWidth="2" /></svg></CaptionButton>
          <CaptionButton $close aria-label="关闭"><svg width="12" height="6" viewBox="0 0 12 6"><path d="M6 0L2 5M6 0l4 5" stroke="#fff" strokeWidth="2.5" /></svg></CaptionButton>
        </Caption>
      </TitleBar>
      <Window>
        <TabRow>
          {tabs.map((t) => (
            <Tab key={t} $active={t === "插入"}>{t}</Tab>
          ))}
          <Help aria-label="帮助"><Icon name="help" /></Help>
        </TabRow>
        <Ribbon>
          <Group $w={51}>
            <GroupBody $pad={4}><Big icon={<TableIcon />} label="表格" drop /></GroupBody>
            <GroupLabel>表格</GroupLabel>
          </Group>
          <Group $w={212}>
            <GroupBody>
              <Big icon={<PictureIcon />} label="图片" />
              <Big icon={<ClipIcon />} label="剪贴画" />
              <Big icon={<AlbumIcon />} label="相册" drop />
              <ShapesAnchor>
                <ShapesButton aria-expanded="true"><Icon name="shapes" />形状<Chevron /></ShapesButton>
                <ShapesPopup />
              </ShapesAnchor>
            </GroupBody>
            <GroupLabel>插图</GroupLabel>
          </Group>
          <Group $w={175}>
            <GroupBody>
              {flowArt.map((f) => (
                <BigButton key={f.name} aria-label={f.name}>
                  <svg width="32" height="32" viewBox="0 0 32 32">{f.d}</svg>
                </BigButton>
              ))}
            </GroupBody>
            <GroupLabel>&nbsp;</GroupLabel>
          </Group>
          <Group $w={70}>
            <GroupBody $pad={5}>
              <Column $w={60}>
                <Small icon="link" label="超链接" off />
                <Small icon="action" label="动作" off />
              </Column>
            </GroupBody>
            <GroupLabel>链接</GroupLabel>
          </Group>
          <Group $w={222}>
            <GroupBody>
              <Big icon={<TextboxIcon />} label="文本框" drop />
              <Column $w={90} $inset>
                <Small icon="header" label="页眉和页脚" />
                <Small icon="wordart" label="艺术字" drop />
                <Small icon="date" label="日期和时间" />
              </Column>
              <Column $w={82}>
                <Small icon="number" label="幻灯片编号" />
                <Small icon="omega" label="符号" off />
                <Small icon="object" label="对象" />
              </Column>
            </GroupBody>
            <GroupLabel>文本</GroupLabel>
          </Group>
          <Group $w={68}>
            <GroupBody $pad={6}>
              <Column $w={60}>
                <Small icon="movie" label="影片" drop />
                <Small icon="sound" label="声音" drop />
              </Column>
            </GroupBody>
            <GroupLabel>媒体剪辑</GroupLabel>
          </Group>
          <Group $w={74}>
            <GroupBody $pad={0}>
              <SymbolGrid>
                {["，", "。", "、", "；", "：", "？"].map((c) => (
                  <SymbolButton key={c}>{c}</SymbolButton>
                ))}
                <SymbolMenu>
                  <svg width="7" height="10" viewBox="0 0 7 10"><path d="M3.5 1a2.5 2.5 0 0 0 0 5L2 9q4-1 4-5.5A2.5 2.5 0 0 0 3.5 1z" fill="#111" /></svg>
                  符号
                  <Chevron />
                </SymbolMenu>
              </SymbolGrid>
            </GroupBody>
            <GroupLabel>特殊符号</GroupLabel>
          </Group>
        </Ribbon>
        <Work>
          <SidePane>
            <PaneTabs>
              <svg width="115" height="22" viewBox="0 0 115 22">
                <path d="M52.5 22V3q0-2.5 3-2.5h32q5 0 8 5l14 16.5z" fill="#9dbdea" stroke="#5c88c4" />
                <path d="M-1 .5h43q5 0 8 5L61 22H-1z" fill="#c5dbf9" stroke="#5c88c4" />
                <path d="M8.5 6.5h10v9h-10z" fill="#fff" stroke="#71788c" /><path d="M12 8.5h3" stroke="#777" />
                <path d="M60 6.5h9M62 8.5h9M60 10.5h9M62 12.5h9M60 14.5h9" stroke="#5b6472" />
              </svg>
              <PaneClose aria-label="关闭窗格">
                <svg width="13" height="12" viewBox="0 0 13 12"><path d="M1.5 1l10 10M11.5 1l-10 10" stroke="#3b649f" strokeWidth="2" /></svg>
              </PaneClose>
            </PaneTabs>
            <ThumbItem aria-label="幻灯片 1">1<Thumb /></ThumbItem>
          </SidePane>
          <Divider />
          <Stage>
            <SlideArea><Slide /></SlideArea>
            <Notes>
              <NotesBox aria-label="备注" defaultValue="单击此处添加备注" />
              <NotesScroll><Tri up /><Tri /></NotesScroll>
            </Notes>
          </Stage>
        </Work>
        <Status>
          <StatusCell $w={76}>幻灯片 1/1</StatusCell>
          <StatusCell $w={104}>“Office 主题”</StatusCell>
          <StatusCell $w={142}><Icon name="spell" />中文(简体，中国)</StatusCell>
          <StatusTools>
            <ViewSwitch>
              <ViewButton $on aria-label="普通视图"><Icon name="normal" /></ViewButton>
              <ViewButton aria-label="幻灯片浏览"><Icon name="sorter" /></ViewButton>
              <ViewButton aria-label="幻灯片放映"><Icon name="show" /></ViewButton>
            </ViewSwitch>
            <Percent>67%</Percent>
            <QuickButton aria-label="缩小"><Icon name="minusC" /></QuickButton>
            <ZoomRange type="range" min="0" max="100" defaultValue="33" aria-label="显示比例" />
            <QuickButton aria-label="放大"><Icon name="plusC" /></QuickButton>
            <FitButton aria-label="适应窗口"><Icon name="fit" /></FitButton>
            <Grip />
          </StatusTools>
        </Status>
      </Window>
      <Watermark>
        <svg width="170" height="84" viewBox="0 0 170 84" fill="#ffffffb0" stroke="#c9cdd3" strokeWidth="1">
          <text x="0" y="54" fontSize="37" fontWeight="700" fontFamily="Liberation Sans, sans-serif">Bai</text>
          <ellipse cx="63" cy="23" rx="6" ry="8" />
          <ellipse cx="75" cy="11" rx="6" ry="8" />
          <ellipse cx="90" cy="12" rx="6" ry="8" />
          <ellipse cx="99" cy="27" rx="6" ry="8" />
          <path d="M81 25c8 0 10 8 15 13 10 9 5 19-5 18-7-1-12-1-19 0-12 1-14-10-6-17 6-5 7-14 15-14z" />
          <text x="69" y="51" fontSize="20" fontWeight="700" fontFamily="Liberation Sans, sans-serif" fill="#fff">du</text>
          <text x="107" y="52" fontSize="28" fontWeight="700" fontFamily="Noto Sans CJK SC, sans-serif">经验</text>
          <text x="1" y="78" fontSize="20" fontFamily="Liberation Sans, sans-serif">jingyan.baidu.com</text>
        </svg>
      </Watermark>
    </Desktop>
  );
}
